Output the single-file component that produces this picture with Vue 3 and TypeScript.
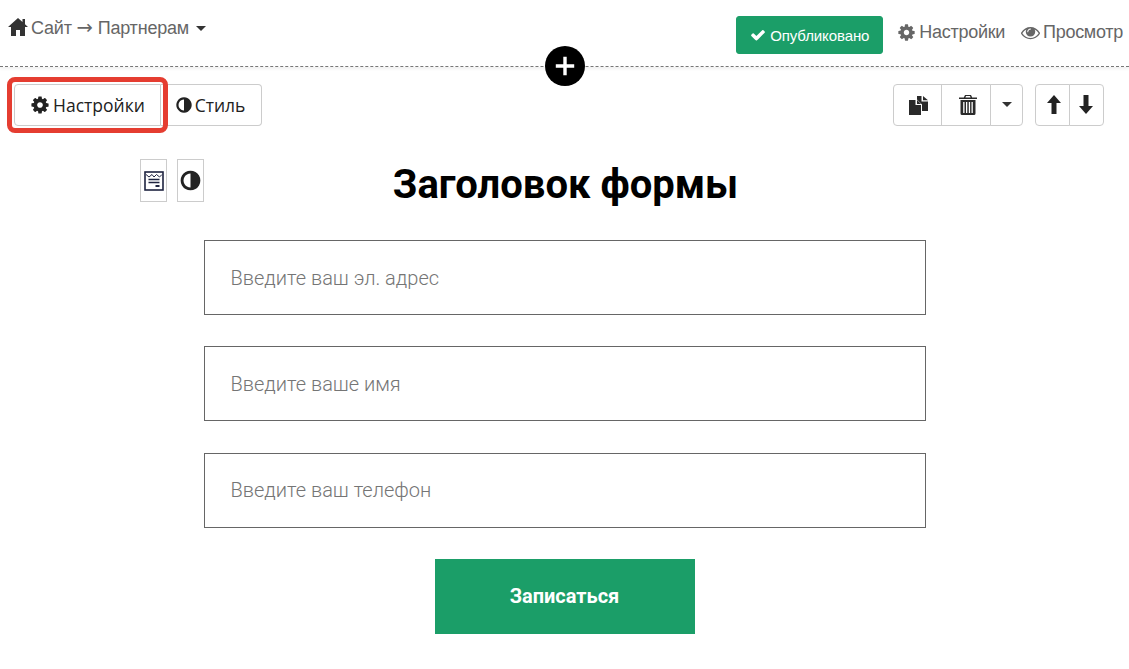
<script setup lang="ts">
const fields: string[] = ['Введите ваш эл. адрес', 'Введите ваше имя', 'Введите ваш телефон']
const cog = 'M1152 896q0-106-75-181t-181-75-181 75-75 181 75 181 181 75 181-75 75-181zm512-109v222q0 12-8 23t-20 13l-185 28q-19 54-39 91 35 50 107 138 10 12 10 25t-9 23q-27 37-99 108t-94 71q-12 0-26-9l-138-108q-44 23-91 38-16 136-29 186-7 28-36 28h-222q-14 0-24.500-8.500t-11.500-21.500l-28-184q-49-16-90-37l-141 107q-10 9-25 9-14 0-25-11-126-114-165-168-7-10-7-23 0-12 8-23 15-21 51-66.500t54-70.500q-27-50-41-99l-183-27q-13-2-21-12.500t-8-23.500v-222q0-12 8-23t19-13l186-28q14-46 39-92-40-57-107-138-10-12-10-24 0-10 9-23 26-36 98.500-107.500t94.500-71.500q13 0 26 10l138 107q44-23 91-38 16-136 29-186 7-28 36-28h222q14 0 24.500 8.500t11.500 21.500l28 184q49 16 90 37l142-107q9-9 24-9 13 0 25 10 129 119 165 170 7 8 7 22 0 12-8 23-15 21-51 66.500t-54 70.500q26 50 41 98l183 28q13 2 21 12.500t8 23.500z'
const adjust = 'M896 1440v-1088q-148 0-273 73t-198 198-73 273 73 273 198 198 273 73zm768-544q0 209-103 385.500t-279.500 279.500-385.500 103-385.500-103-279.500-279.500-103-385.500 103-385.500 279.500-279.500 385.500-103 385.500 103 279.500 279.500 103 385.500z'
const eye = 'M1664 960q-152-236-381-353 61 104 61 225 0 185-131.500 316.500t-316.500 131.500-316.500-131.500-131.500-316.500q0-121 61-225-229 117-381 353 133 205 333.500 326.500t434.500 121.500 434.500-121.500 333.500-326.500zm-720-384q0-20-14-34t-34-14q-125 0-214.500 89.500t-89.500 214.500q0 20 14 34t34 14 34-14 14-34q0-86 61-147t147-61q20 0 34-14t14-34zm848 384q0 34-20 69-140 230-376.500 368.500t-499.500 138.500-499.500-139-376.500-368q-20-35-20-69t20-69q140-229 376.500-368t499.500-139 499.500 139 376.500 368q20 35 20 69z'
const check = 'M1671 566q0 40-28 68l-724 724-136 136q-28 28-68 28t-68-28l-136-136-362-362q-28-28-28-68t28-68l136-136q28-28 68-28t68 28l294 295 656-657q28-28 68-28t68 28l136 136q28 28 28 68z'
</script>

<template>
  <div class="page">
    <header class="top">
      <div class="crumb">
        <svg class="home" viewBox="0 0 20 18" width="20" height="18"><path d="M10 0l4.500 4V1H17v5.200L20 9h-3v9h-5v-6H8v6H3V9H0z" fill="#333" /></svg>
        <span>Сайт <span class="arrow">→</span> Партнерам</span>
        <i class="caret crumb-caret"></i>
      </div>
      <div class="top-right">
        <button class="publish">
          <svg class="ic chk" viewBox="0 0 1792 1792"><path :d="check" /></svg>Опубликовано
        </button>
        <span class="link"><svg class="ic gear" viewBox="0 0 1792 1792"><path :d="cog" /></svg>Настройки</span>
        <span class="link last"><svg class="ic eye" viewBox="0 0 1792 1792"><path :d="eye" /></svg>Просмотр</span>
      </div>
      <button class="add" aria-label="add">
        <svg viewBox="0 0 24 24" width="24" height="24"><path d="M10.300 2.800h3.400v7.500h7.500v3.400h-7.500v7.500h-3.400v-7.500H2.800v-3.400h7.500z" fill="#fff" /></svg>
      </button>
    </header>

    <div class="toolbar">
      <div class="tabs">
        <div class="focus-ring"></div>
        <button class="tb tab-a"><svg class="ic cog-b" viewBox="0 0 1792 1792"><path :d="cog" /></svg>Настройки</button>
        <button class="tb tab-b"><svg class="ic adj-b" viewBox="0 0 1792 1792"><path :d="adjust" /></svg>Стиль</button>
      </div>
      <div class="tools">
        <div class="group">
          <button class="tb b-copy">
            <svg viewBox="0 0 20 20" width="20" height="20"><path d="M0 5h6.500v5H12v10H0zM8 5l4 4H8zM8 1h4.500v5.500H19V16h-6V9.500L8 4.500zM14 1l5 4.200h-5z" fill="#2a2a2a" /></svg>
          </button>
          <button class="tb b-trash">
            <svg viewBox="0 0 18 20" width="18" height="20"><path fill-rule="evenodd" d="M6 0h6l1.200 2.500H18V4H0V2.500h4.800zM7 1l-.6 1.500h5.200L11 1zM1.500 5h15v13.500a1.500 1.500 0 0 1-1.500 1.500H3a1.500 1.500 0 0 1-1.500-1.500zM4.200 7v11h1.300V7zM7 7v11h1.300V7zM9.800 7v11h1.300V7zM12.500 7v11h1.300V7z" fill="#2a2a2a" /></svg>
          </button>
          <button class="tb b-more"><i class="caret dark"></i></button>
        </div>
        <div class="group">
          <button class="tb b-arrow up"><svg viewBox="0 0 14 19" width="14" height="19"><path d="M7 0l7 8H9.500v11h-5V8H0z" fill="#222" /></svg></button>
          <button class="tb b-arrow down"><svg viewBox="0 0 14 19" width="14" height="19"><path d="M7 19L0 11h4.500V0h5v11H14z" fill="#222" /></svg></button>
        </div>
      </div>
    </div>

    <main class="canvas">
      <div class="side">
        <div class="side-btn">
          <svg viewBox="0 0 20 20" width="20" height="20" fill="none" stroke="#1f2440"><rect x="1" y="1" width="18" height="18" stroke-width="1.600" /><path d="M2 3.500l3 2.500 3-2.500 2 2.500 2.500-2.500 3 2.500 2.500-2.500" stroke-width="1" /><path d="M4.500 8.500h11M4.500 11.500h11" stroke-width="1.300" /><path d="M11.500 15h4" stroke-width="2" /></svg>
        </div>
        <div class="side-btn">
          <svg class="ic adj-s" viewBox="0 0 1792 1792"><path :d="adjust" /></svg>
        </div>
      </div>
      <h1 class="title">Заголовок формы</h1>
      <form class="form" @submit.prevent>
        <input v-for="f in fields" :key="f" class="field" type="text" :placeholder="f" />
        <button class="submit" type="submit">Записаться</button>
      </form>
    </main>
  </div>
</template>

<style>
html, body { margin: 0; background: #fff; }
</style>

<style scoped>
.page { width: 1129px; height: 669px; overflow: hidden; font-family: "Liberation Sans", Arial, sans-serif; color: #222; }
.ic { fill: currentColor; display: inline-block; flex: none; }
button { font-family: inherit; cursor: pointer; }

.top { position: relative; height: 67px; box-sizing: border-box; border-bottom: 1px dashed #777; box-shadow: 0 2px 3px rgba(0,0,0,.06); display: flex; justify-content: space-between; align-items: flex-start; }
.crumb { display: flex; align-items: center; margin: 16px 0 0 8px; font-size: 18px; line-height: 24px; color: #666; }
.home { flex: none; margin: -3px 3px 0 0; }
.crumb span { letter-spacing: -.2px; }
.crumb .arrow { font-family: "DejaVu Sans", sans-serif; font-size: 19.500px; line-height: 0; letter-spacing: 0; }
.caret { display: inline-block; width: 0; height: 0; border-left: 5px solid transparent; border-right: 5px solid transparent; border-top: 5px solid #333; }
.crumb-caret { margin-left: 7px; }
.top-right { display: flex; align-items: flex-start; margin: 16px 6px 0 0; }
.publish { height: 38px; width: 147px; padding: 0; display: flex; align-items: center; justify-content: center; background: #1b9e68; border: 1px solid #1b9e68; border-radius: 3px; color: #fff; font-size: 15px; letter-spacing: -.1px; }
.chk { width: 16px; height: 16px; margin-right: 4px; }
.link { display: flex; align-items: center; font-size: 18px; line-height: 24px; color: #666; margin: 4px 0 0 14px; letter-spacing: -.28px; }
.link.last { margin-left: 16px; }
.gear { width: 19px; height: 19px; margin-right: 3px; }
.eye { width: 19px; height: 19px; margin-right: 3px; }
.add { position: absolute; left: 545px; top: 46px; width: 40px; height: 40px; padding: 0; border: 0; border-radius: 50%; background: #000; display: flex; align-items: center; justify-content: center; z-index: 2; }

.toolbar { display: flex; justify-content: space-between; height: 42px; margin-top: 17px; padding: 0 25px 0 14px; }
.tabs { position: relative; display: flex; }
.focus-ring { position: absolute; left: -7px; top: -7px; width: 161px; height: 56px; box-sizing: border-box; border: 5px solid #e53d31; border-radius: 8px; pointer-events: none; z-index: 1; }
.tb { height: 42px; box-sizing: border-box; background: #fff; border: 1px solid #ccc; border-radius: 4px; color: #222; padding: 0 0 1px; display: flex; align-items: center; justify-content: center; font-family: "Open Sans", sans-serif; font-size: 17.500px; }
.tab-a { width: 147px; border-radius: 4px 0 0 4px; }
.tab-b { width: 101px; border-left: 0; border-radius: 0 4px 4px 0; padding-right: 2px; }
.cog-b { width: 20px; height: 20px; margin-right: 3px; }
.adj-b { width: 18px; height: 18px; margin-right: 2px; }
.adj-s { width: 23px; height: 23px; }
.tools { display: flex; gap: 12px; }
.group { display: flex; }
.group .tb { border-radius: 0; margin-left: -1px; }
.group .tb:first-child { border-radius: 4px 0 0 4px; margin-left: 0; }
.group .tb:last-child { border-radius: 0 4px 4px 0; }
.b-copy { width: 49px; padding-left: 2px; }
.b-trash { width: 50px; padding-left: 3px; }
.b-more { width: 33px; }
.b-arrow { width: 35px; }
.b-arrow.up { padding-left: 3px; }
.b-arrow.down { padding-right: 1px; }

.canvas { position: relative; }
.side { position: absolute; left: 140px; top: 33px; display: flex; gap: 10px; }
.side-btn { width: 27px; height: 43px; box-sizing: border-box; border: 1px solid #ccc; display: flex; align-items: center; justify-content: center; }
.title { margin: 0; padding-top: 35px; text-align: center; font-family: Roboto, sans-serif; font-weight: 700; font-size: 40px; line-height: 48px; color: #000; transform: translateX(1px); }
.form { width: 722px; margin: 30.800px auto 0; display: flex; flex-direction: column; }
.field { height: 75px; box-sizing: border-box; border: 1px solid #666; border-radius: 0; padding: .25px 26px 0; margin-bottom: 31.500px; font-family: Roboto, sans-serif; font-weight: 300; font-size: 20px; color: #333; background: #fff; outline: 0; }
.field:first-child { padding-top: 1px; }
.field::placeholder { color: #757575; opacity: 1; }
.submit { align-self: center; width: 260px; height: 75px; border: 0; padding: 0 0 2px; background: #1b9e68; color: #fff; font-family: Roboto, sans-serif; font-weight: 700; font-size: 20px; }
</style>
